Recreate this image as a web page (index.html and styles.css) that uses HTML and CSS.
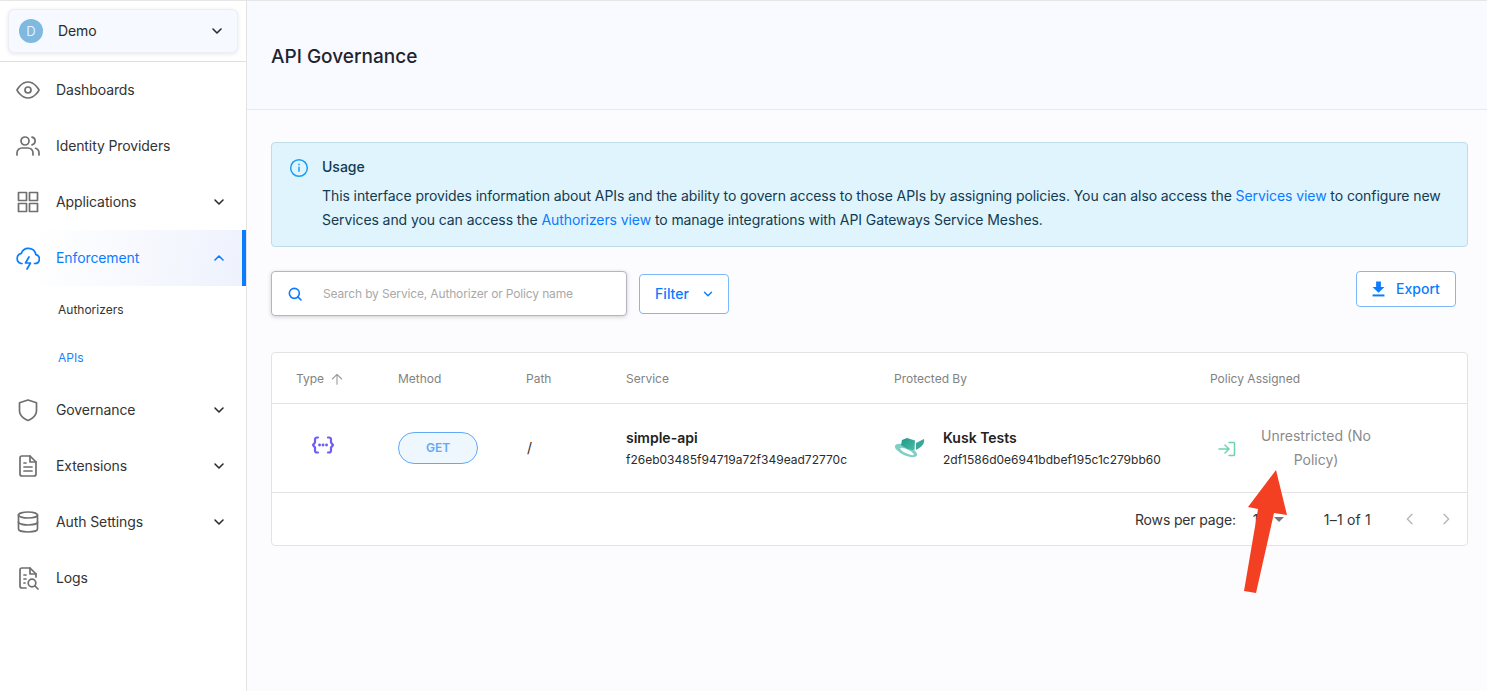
FILE: index.html
```html
<!DOCTYPE html>
<html lang="en">
<head>
    <meta charset="UTF-8">
    <title>API Governance</title>
    <link rel="stylesheet" href="styles.css">
</head>
<body>

<aside class="sidebar">
    <div class="tenant-wrap">
        <div class="tenant">
            <span class="avatar">D</span>
            <span class="tenant-name">Demo</span>
            <svg class="chev dark" viewBox="0 0 24 24"><path d="M6 9l6 6 6-6"/></svg>
        </div>
    </div>
    <nav>
        <a class="nav-item">
            <svg class="nav-icon" viewBox="0 0 24 24"><path d="M1 12s4-8 11-8 11 8 11 8-4 8-11 8-11-8-11-8z"/><circle cx="12" cy="12" r="3"/></svg>
            <span>Dashboards</span>
        </a>
        <a class="nav-item">
            <svg class="nav-icon" viewBox="0 0 24 24"><path d="M1 21v-2a5 5 0 0 1 5-5h6a5 5 0 0 1 5 5v2"/><circle cx="9" cy="7" r="4"/><path d="M23 21v-2a5 5 0 0 0-3.500-4.700"/><path d="M16 3.100a4 4 0 0 1 0 7.800"/></svg>
            <span>Identity Providers</span>
        </a>
        <a class="nav-item">
            <svg class="nav-icon" viewBox="0 0 24 24"><rect x="2.500" y="2.500" width="8" height="8"/><rect x="13.500" y="2.500" width="8" height="8"/><rect x="13.500" y="13.500" width="8" height="8"/><rect x="2.500" y="13.500" width="8" height="8"/></svg>
            <span>Applications</span>
            <svg class="chev" viewBox="0 0 24 24"><path d="M6 9l6 6 6-6"/></svg>
        </a>
        <a class="nav-item active">
            <svg class="nav-icon" viewBox="0 0 24 24"><path d="M18.500 17.500h.5a4.500 4.500 0 0 0 .8-8.900A7.500 7.500 0 0 0 5.300 7.400 5.200 5.200 0 0 0 5 17.500h1"/><path d="M13 11l-3.500 6h5L11 23"/></svg>
            <span>Enforcement</span>
            <svg class="chev" viewBox="0 0 24 24"><path d="M6 15l6-6 6 6"/></svg>
        </a>
        <a class="sub-item">Authorizers</a>
        <a class="sub-item current">APIs</a>
        <a class="nav-item">
            <svg class="nav-icon" viewBox="0 0 24 24"><path d="M12 22.500s-8.500-3-8.500-10V4.800L12 2l8.500 2.800v7.700c0 7-8.500 10-8.500 10z"/></svg>
            <span>Governance</span>
            <svg class="chev" viewBox="0 0 24 24"><path d="M6 9l6 6 6-6"/></svg>
        </a>
        <a class="nav-item">
            <svg class="nav-icon" viewBox="0 0 24 24"><path d="M14 2H6a2 2 0 0 0-2 2v16a2 2 0 0 0 2 2h12a2 2 0 0 0 2-2V8z"/><path d="M14 2v6h6M8 13h8M8 17h8M8 9h2"/></svg>
            <span>Extensions</span>
            <svg class="chev" viewBox="0 0 24 24"><path d="M6 9l6 6 6-6"/></svg>
        </a>
        <a class="nav-item">
            <svg class="nav-icon" viewBox="0 0 24 24"><ellipse cx="12" cy="5" rx="9.500" ry="3"/><path d="M21.500 12c0 1.700-4.300 3-9.500 3s-9.500-1.300-9.500-3"/><path d="M2.500 5v14c0 1.700 4.300 3 9.500 3s9.500-1.300 9.500-3V5"/></svg>
            <span>Auth Settings</span>
            <svg class="chev" viewBox="0 0 24 24"><path d="M6 9l6 6 6-6"/></svg>
        </a>
        <a class="nav-item">
            <svg class="nav-icon" viewBox="0 0 24 24"><path d="M10 22H6a2 2 0 0 1-2-2V4a2 2 0 0 1 2-2h8l6 6v3"/><path d="M14 2v6h6M8 9h2M8 13h2M8 17h1"/><circle cx="16" cy="17" r="3.800"/><path d="M19 20l3 3"/></svg>
            <span>Logs</span>
        </a>
    </nav>
</aside>

<main class="main">
    <header class="page-head">
        <h1>API Governance</h1>
    </header>

    <section class="content">
        <div class="banner">
            <svg class="info-icon" viewBox="0 0 24 24"><circle cx="12" cy="12" r="10"/><path d="M12 16v-5M12 8v-.5"/></svg>
            <div>
                <div class="banner-title">Usage</div>
                <p>This interface provides information about APIs and the ability to govern access to those APIs by assigning policies. You can also access the <a>Services view</a> to configure new Services and you can access the <a>Authorizers view</a> to manage integrations with API Gateways Service Meshes.</p>
            </div>
        </div>

        <div class="toolbar">
            <div class="search">
                <svg viewBox="0 0 24 24"><circle cx="11" cy="11" r="7.500"/><path d="M21 21l-4.600-4.600"/></svg>
                <span>Search by Service, Authorizer or Policy name</span>
            </div>
            <button class="btn filter">Filter
                <svg class="chev" viewBox="0 0 24 24"><path d="M6 9l6 6 6-6"/></svg>
            </button>
            <button class="btn export">
                <svg viewBox="0 0 24 24"><path class="solid" d="M9 3h6v7h4.500L12 17.500 4.500 10H9z"/><path class="solid" d="M4.500 19.500h15V22h-15z"/></svg>
                Export
            </button>
        </div>

        <div class="table">
            <div class="row head">
                <div>Type
                    <svg class="sort" viewBox="0 0 24 24"><path d="M12 20V5M5 12l7-7 7 7"/></svg>
                </div>
                <div>Method</div>
                <div>Path</div>
                <div>Service</div>
                <div>Protected By</div>
                <div>Policy Assigned</div>
            </div>
            <div class="row body">
                <div>
                    <svg class="type-icon" viewBox="0 0 22 18"><path d="M6 1.500H5a2 2 0 0 0-2 2v3L1 9l2 2.500v3a2 2 0 0 0 2 2h1M16 1.500h1a2 2 0 0 1 2 2v3L21 9l-2 2.500v3a2 2 0 0 1-2 2h-1"/><path class="dots" d="M7.500 9h.1M11 9h.1M14.500 9h.1"/></svg>
                </div>
                <div><span class="method">GET</span></div>
                <div class="path">/</div>
                <div>
                    <div class="name">simple-api</div>
                    <div class="id">f26eb03485f94719a72f349ead72770c</div>
                </div>
                <div class="protected">
                    <svg class="hat" viewBox="0 0 30 22">
                        <defs>
                            <linearGradient id="hatTop" x1="0" y1="0" x2="1" y2="1">
                                <stop offset="0" stop-color="#1c9a88"/>
                                <stop offset="1" stop-color="#4db9a9"/>
                            </linearGradient>
                        </defs>
                        <ellipse cx="11" cy="13.500" rx="12" ry="5" transform="rotate(25 11 13.500)" fill="#7fcfc5"/>
                        <ellipse cx="12" cy="14.500" rx="7.500" ry="2" transform="rotate(25 12 14.500)" fill="#fff"/>
                        <path fill="url(#hatTop)" d="M7 3L12 1 20 3.500 19.500 13C14 13 10 11 6 8z"/>
                        <path fill="#3aa899" d="M21 6C24 5 26 3 29 2 30 6 27 10 21 13z"/>
                    </svg>
                    <div>
                        <div class="name">Kusk Tests</div>
                        <div class="id">2df1586d0e6941bdbef195c1c279bb60</div>
                    </div>
                </div>
                <div class="policy">
                    <svg class="policy-icon" viewBox="0 0 18 16"><path d="M11 1.500h4.500a1 1 0 0 1 1 1v11a1 1 0 0 1-1 1H11"/><path d="M1 8h10M7 4l4 4-4 4"/></svg>
                    <span>Unrestricted (No Policy)</span>
                </div>
            </div>
            <div class="pager">
                <span class="rows-label">Rows per page:</span>
                <span class="rows-select">10<i class="caret"></i></span>
                <span class="range">1–1 of 1</span>
                <svg class="page-arrow" viewBox="0 0 24 24"><path d="M15 5l-7 7 7 7"/></svg>
                <svg class="page-arrow" viewBox="0 0 24 24"><path d="M9 5l7 7-7 7"/></svg>
            </div>
        </div>
    </section>
</main>

<!-- red annotation arrow on top of the screenshot -->
<svg class="annotation" viewBox="1240 465 50 130"><path d="M1276 470L1287 515 1274 513 1256 593 1244 591 1258 509 1248 507z"/></svg>

</body>
</html>
```

FILE: styles.css
```css
* {
    box-sizing: border-box;
}

body {
    margin: 0;
    height: 691px;
    overflow: hidden;
    display: flex;
    font-family: Inter, "Liberation Sans", sans-serif;
    font-size: 14px;
    color: #2b2b2b;
    background-color: #fcfcff;
}

svg {
    fill: none;
    stroke: currentColor;
    stroke-width: 2;
    stroke-linecap: round;
    stroke-linejoin: round;
    flex-shrink: 0;
}

/* Sidebar */
.sidebar {
    width: 247px;
    flex-shrink: 0;
    height: 691px;
    background-color: #fff;
    border-right: 1px solid #e3e3e3;
    box-shadow: inset 0 1px 0 #e6e6e6;
}

.tenant-wrap {
    height: 62px;
    padding: 9px 8px 0 8px;
    border-bottom: 1px solid #e0e0e0;
}

.tenant {
    height: 44px;
    display: flex;
    align-items: center;
    padding: 0 12px 0 10px;
    background-color: #f6f9ff;
    border: 1px solid #eceef2;
    border-radius: 6px;
    box-shadow: 0 1px 4px rgba(0, 0, 0, 0.1);
}

.avatar {
    width: 24px;
    height: 24px;
    border-radius: 50%;
    background-color: #7fb9df;
    color: #e4f1fa;
    font-size: 13px;
    line-height: 24px;
    text-align: center;
}

.tenant-name {
    margin-left: 15px;
    padding-bottom: 1px;
    flex: 1;
    letter-spacing: -0.1px;
}

.chev {
    width: 16px;
    height: 16px;
    stroke-width: 2.400;
    color: #2b2b2b;
}

.nav-item {
    height: 56px;
    display: flex;
    align-items: center;
    padding: 0 19px 0 16px;
    color: #333;
}

.nav-item span {
    margin-left: 16px;
    padding-bottom: 2px;
    flex: 1;
    letter-spacing: -0.1px;
}

.nav-icon {
    width: 24px;
    height: 24px;
    stroke-width: 1.700;
    color: #6f6f6f;
}

.nav-item.active {
    color: #0a7cff;
    background: linear-gradient(100deg, #fff 15%, #eef2fd 100%);
    border-right: 4px solid #0a7cff;
    padding-right: 15px;
}

.nav-item.active .nav-icon,
.nav-item.active .chev {
    color: #0a7cff;
}

.sub-item {
    height: 48px;
    display: flex;
    align-items: center;
    padding: 0 0 2px 58px;
    font-size: 12px;
    color: #333;
}

.sub-item.current {
    color: #1a82f7;
}

/* Main */
.main {
    flex: 1;
    min-width: 0;
}

.page-head {
    height: 110px;
    padding: 3px 0 0 24px;
    display: flex;
    align-items: center;
    background-color: #f8faff;
    border-bottom: 1px solid #e6e9ee;
    box-shadow: inset 0 1px 0 #e6e6e6;
}

h1 {
    margin: 0;
    font-size: 19px;
    font-weight: 500;
    color: #1e2430;
}

.content {
    padding: 32px 19px 0 24px;
}

.banner {
    height: 105px;
    display: flex;
    padding: 13px 20px 0 17px;
    background-color: #dff4fc;
    border: 1px solid #bfdde8;
    border-radius: 4px;
    color: #133a52;
}

.info-icon {
    width: 20px;
    height: 20px;
    margin: 2px 13px 0 0;
    color: #1a9df2;
    stroke-width: 1.800;
}

.banner-title {
    font-weight: 500;
    line-height: 22px;
}

.banner p {
    margin: 6px 0 0;
    line-height: 24px;
    letter-spacing: -0.085px;
}

.banner a {
    color: #0a7cff;
}

.toolbar {
    display: flex;
    align-items: flex-start;
    margin-top: 24px;
}

.search {
    width: 356px;
    height: 45px;
    display: flex;
    align-items: center;
    padding-left: 15px;
    background-color: #fff;
    border: 1px solid #b4b4c6;
    border-radius: 4px;
    box-shadow: 0 1px 4px rgba(0, 0, 0, 0.18);
    font-size: 12px;
    letter-spacing: -0.15px;
    color: #a9a9a9;
}

.search svg {
    width: 16px;
    height: 16px;
    color: #0a7cff;
    stroke-width: 2.400;
    margin-right: 20px;
}

.btn {
    display: flex;
    align-items: center;
    justify-content: center;
    font-family: inherit;
    font-size: 14px;
    font-weight: 500;
    color: #0a7cff;
    background-color: #fff;
    border: 1px solid #7db8fb;
    border-radius: 4px;
    padding-bottom: 2px;
}

.filter {
    width: 90px;
    height: 40px;
    margin: 3px 0 0 12px;
    padding-left: 8px;
}

.filter .chev {
    width: 14px;
    height: 14px;
    color: #0a7cff;
    margin-left: 12px;
}

.export {
    width: 100px;
    height: 36px;
    margin-left: auto;
    margin-right: 12px;
    padding-right: 9px;
}

.export svg {
    width: 19px;
    height: 19px;
    margin-right: 8px;
    stroke: none;
}

.export .solid {
    fill: #0a7cff;
}

.table {
    margin-top: 36px;
    background-color: #fff;
    border: 1px solid #e3e3e3;
    border-radius: 4px;
}

.row {
    display: grid;
    grid-template-columns: 102px 128px 100px 268px 316px 1fr;
    align-items: center;
    padding-left: 24px;
    border-bottom: 1px solid #e3e3e3;
}

.head {
    height: 51px;
    padding-top: 1px;
    font-size: 12px;
    color: #828282;
}

.head > div {
    display: flex;
    align-items: center;
}

.sort {
    width: 16px;
    height: 16px;
    margin-left: 5px;
    stroke-width: 1.600;
    color: #9a9a9a;
}

.body {
    height: 89px;
}

.type-icon {
    width: 22px;
    height: 18px;
    margin: 0 0 6px 16px;
    color: #6d5ef5;
    display: block;
    stroke-width: 2.200;
}

.dots {
    stroke-width: 2.800;
}

.method {
    display: block;
    width: 80px;
    height: 32px;
    line-height: 30px;
    text-align: center;
    font-size: 12px;
    font-weight: 600;
    color: #62a9f7;
    background-color: #eef6fe;
    border: 1px solid #62a9f7;
    border-radius: 16px;
}

.path {
    padding: 0 0 1px 1px;
}

.name {
    font-size: 14px;
    font-weight: 600;
    line-height: 20px;
    margin-top: 1px;
    color: #222;
}

.id {
    font-size: 12px;
    line-height: 20px;
    margin-top: 2px;
    color: #2b2b2b;
}

.protected {
    display: flex;
    align-items: center;
    padding-left: 1px;
}

.hat {
    width: 30px;
    height: 22px;
    margin-right: 18px;
    stroke: none;
}

.policy {
    display: flex;
    align-items: center;
    padding: 0 90px 0 8px;
    color: #8a8a8a;
    line-height: 24px;
}

.policy span {
    width: 124px;
    margin-left: 18px;
    text-align: center;
}

.policy-icon {
    width: 18px;
    height: 16px;
    margin-top: 1px;
    color: #6fd3ae;
    stroke-width: 1.500;
}

.pager {
    height: 52px;
    display: flex;
    align-items: center;
    justify-content: flex-end;
    padding-right: 13px;
    color: #333;
}

.rows-label {
    letter-spacing: -0.15px;
}

.rows-select {
    width: 34px;
    margin-left: 17px;
    display: flex;
    align-items: center;
}

.caret {
    margin-left: 7px;
    border-left: 5px solid transparent;
    border-right: 5px solid transparent;
    border-top: 5px solid #777;
}

.range {
    margin: 0 25px 0 37px;
    letter-spacing: 0.2px;
}

.page-arrow {
    width: 16px;
    height: 16px;
    margin-left: 20px;
    color: #b5b5b5;
}

.range + .page-arrow {
    margin-left: 6px;
}

/* Annotation */
.annotation {
    position: absolute;
    left: 1240px;
    top: 465px;
    width: 50px;
    height: 130px;
    stroke: none;
    fill: #f44022;
}
```
